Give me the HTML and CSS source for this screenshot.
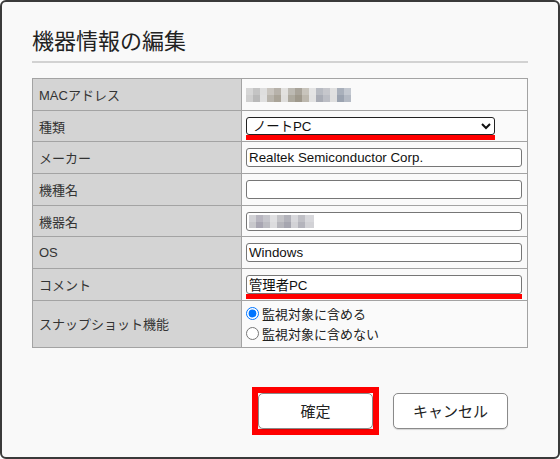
FILE: index.html
```html
<!DOCTYPE html>
<html lang="ja">
<head>
    <meta charset="UTF-8">
    <meta name="viewport" content="width=device-width, initial-scale=1.0">
    <title>機器情報の編集</title>
    <link rel="stylesheet" href="styles.css">
</head>
<body>
    <div class="dialog">
        <h1 class="dialog-title">機器情報の編集</h1>

        <table class="device-table">
            <tr>
                <th>MACアドレス</th>
                <td><span class="mosaic mosaic-mac"></span></td>
            </tr>
            <tr>
                <th>種類</th>
                <td>
                    <span class="mark-line mark-select">
                        <select class="field-select">
                            <option>ノートPC</option>
                            <option>デスクトップPC</option>
                            <option>スマートフォン</option>
                        </select>
                    </span>
                </td>
            </tr>
            <tr>
                <th>メーカー</th>
                <td><input type="text" class="field-input" value="Realtek Semiconductor Corp."></td>
            </tr>
            <tr>
                <th>機種名</th>
                <td><input type="text" class="field-input" value=""></td>
            </tr>
            <tr>
                <th>機器名</th>
                <td>
                    <span class="field-box">
                        <span class="mosaic mosaic-name"></span>
                    </span>
                </td>
            </tr>
            <tr>
                <th>OS</th>
                <td><input type="text" class="field-input" value="Windows"></td>
            </tr>
            <tr>
                <th>コメント</th>
                <td>
                    <span class="mark-line mark-input">
                        <input type="text" class="field-input" value="管理者PC">
                    </span>
                </td>
            </tr>
            <tr class="row-tall">
                <th>スナップショット機能</th>
                <td>
                    <label class="radio-line"><input type="radio" name="snapshot" checked>監視対象に含める</label>
                    <label class="radio-line"><input type="radio" name="snapshot">監視対象に含めない</label>
                </td>
            </tr>
        </table>

        <div class="dialog-buttons">
            <span class="mark-box"><button class="btn">確定</button></span>
            <button class="btn">キャンセル</button>
        </div>
    </div>
</body>
</html>
```

FILE: styles.css
```css
/* Basic Styles */
body {
    margin: 0;
    padding: 0;
    font-family: "Liberation Sans", "Noto Sans CJK JP", sans-serif;
    color: #333;
}

.dialog {
    box-sizing: border-box;
    width: 560px;
    height: 459px;
    border: 2px solid #3a3a3a;
    border-radius: 6px;
    background-color: #f9f9f9;
    padding: 25px 30px 0 30px;
}

.dialog-title {
    margin: 0 0 15px 0;
    padding: 0 0 4px 0;
    font-size: 22px;
    line-height: 30px;
    font-weight: normal;
    color: #222;
    border-bottom: 2px solid #d2d2d2;
}

.device-table {
    width: 496px;
    border-collapse: collapse;
    font-size: 13px;
}

.device-table th,
.device-table td {
    border: 1px solid #a3a3a3;
    height: 30.7px;
    padding: 0 4px;
    text-align: left;
    vertical-align: middle;
}

.device-table th {
    width: 198px;
    padding-left: 6px;
    background-color: #d4d4d4;
    font-weight: normal;
    color: #333;
}

.device-table td {
    background-color: #fafafa;
}

.device-table .row-tall th,
.device-table .row-tall td {
    height: 46px;
}

.field-input,
.field-box {
    box-sizing: border-box;
    display: block;
    width: 276px;
    height: 19px;
    margin: 0;
    padding: 0 2px;
    border: 1px solid #767676;
    border-radius: 3px;
    background-color: #fff;
    font-family: "Liberation Sans", "Noto Sans CJK JP", sans-serif;
    font-size: 13.33px;
    color: #111;
}

.field-box {
    padding-top: 2px;
}

.field-select {
    box-sizing: border-box;
    display: block;
    width: 249px;
    height: 18px;
    margin: 0;
    padding: 0 2px;
    border: 1px solid #222;
    border-radius: 3px;
    background-color: #fff;
    font-family: "Liberation Sans", "Noto Sans CJK JP", sans-serif;
    font-size: 13.33px;
    color: #111;
}

/* red annotation marks */
.mark-line {
    display: block;
    border-bottom: 5px solid #f00;
}

.mark-select {
    width: 249px;
    margin-top: 4px;
}

.mark-input {
    width: 276px;
    margin-top: 5px;
}

.mark-box {
    display: inline-block;
    border: 6px solid #f00;
    line-height: 0;
}

/* pixelated (hidden) values */
.mosaic {
    display: inline-block;
    vertical-align: middle;
}

.mosaic-mac {
    width: 105px;
    height: 14px;
    background:
        linear-gradient(90deg, #d6d6d6 0 7px, #c4c4c4 7px 14px, #dedede 14px 21px, #c9c5bf 21px 28px, #b7b2aa 28px 35px, #e2e1df 35px 42px, #bdbab3 42px 49px, #a9a49a 49px 56px, #c8c4bc 56px 63px, #e4e4e4 63px 70px, #b8bbc2 70px 77px, #c6c7cc 77px 84px, #e0e0e0 84px 91px, #a9b0bb 91px 98px, #c3c8d0 98px 105px) top / 100% 7px no-repeat,
        linear-gradient(90deg, #cfcfcf 0 7px, #b9b9b9 7px 14px, #e0e0e0 14px 21px, #b9b5ad 21px 28px, #aaa498 28px 35px, #dfdedc 35px 42px, #aeaa9f 42px 49px, #9f998c 49px 56px, #bdb8ae 56px 63px, #e2e2e2 63px 70px, #a9acb5 70px 77px, #bcbec5 77px 84px, #dfdfdf 84px 91px, #9ba3b0 91px 98px, #b4bac4 98px 105px) bottom / 100% 7px no-repeat;
}

.mosaic-name {
    display: block;
    width: 65px;
    height: 13px;
    background:
        linear-gradient(90deg, #d2d2d6 0 7px, #b8b6c0 7px 14px, #c6c6cc 14px 21px, #e0e0e2 21px 28px, #c4c4c8 28px 35px, #b2b2ba 35px 42px, #d8d8dc 42px 49px, #c0c0c6 49px 56px, #d8d8dc 56px 65px) top / 100% 7px no-repeat,
        linear-gradient(90deg, #c8c8cc 0 7px, #a8a6b2 7px 14px, #bcbcc2 14px 21px, #dcdcde 21px 28px, #b6b6bc 28px 35px, #a6a6b0 35px 42px, #d2d2d6 42px 49px, #b4b4bc 49px 56px, #d2d2d6 56px 65px) bottom / 100% 6px no-repeat;
}

.radio-line {
    display: flex;
    align-items: center;
    height: 20px;
    font-size: 13px;
    color: #222;
}

.radio-line input {
    width: 13px;
    height: 13px;
    margin: 0 3px 0 0;
}

.dialog-buttons {
    display: flex;
    justify-content: flex-end;
    align-items: center;
    gap: 14px;
    margin-top: 39px;
    padding-right: 20px;
}

.btn {
    box-sizing: border-box;
    width: 115px;
    height: 36px;
    border: 1px solid #8a8a8a;
    border-radius: 5px;
    background-color: #fff;
    box-shadow: 0 1px 1px rgba(0, 0, 0, 0.15);
    font-family: "Noto Sans CJK JP", sans-serif;
    font-size: 15px;
    color: #222;
    cursor: pointer;
}
```
